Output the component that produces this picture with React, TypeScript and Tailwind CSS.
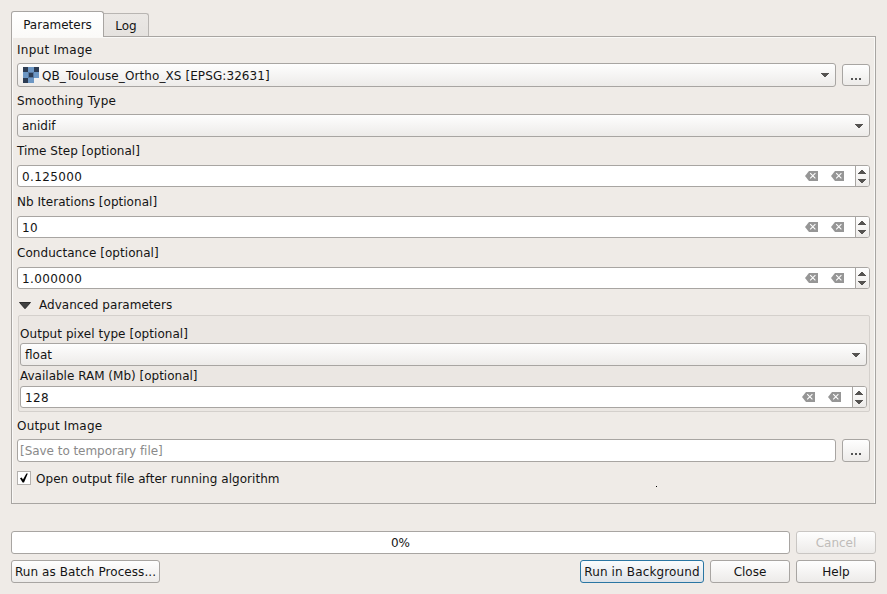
import React from "react";

const FIELD = "flex items-center rounded-[3px] border border-[#a8a5a2]";
const FACE = "bg-linear-to-b from-[#fefefe] to-[#edebe9]";

function Label({ text, className }: { text: string; className: string }) {
  return <div className={`leading-[15px] ${className}`}>{text}</div>;
}

function DownArrow({ className = "" }: { className?: string }) {
  return (
    <svg width="8" height="4" viewBox="0 0 8 4" className={`shrink-0 ${className}`} shapeRendering="crispEdges">
      <path d="M0 0h8v1h-1v1h-1v1h-1v1h-2v-1h-1v-1h-1v-1h-1z" fill="#555351" />
    </svg>
  );
}

function Combo({ value, className, icon }: { value: string; className: string; icon?: React.ReactNode }) {
  return (
    <div className={`${FIELD} ${FACE} ${className}`}>
      {icon}
      <span className="grow pt-[2px] leading-[15px]">{value}</span>
      <DownArrow className="mr-[6px]" />
    </div>
  );
}

function ClearIcon({ className }: { className: string }) {
  return (
    <svg width="13" height="10" viewBox="0 0 13 10" className={`shrink-0 ${className}`}>
      <path d="M4 0H13V10H4L0 5Z" fill="#969696" />
      <path d="M5.2 2.2l5.2 5.2M10.4 2.2L5.2 7.4" stroke="#fff" strokeWidth="1.1" />
    </svg>
  );
}

function Spin({ value }: { value: string }) {
  return (
    <div className={`${FIELD} h-[22px] bg-white pl-1`}>
      <span className="grow pt-[3px] leading-[15px] tracking-[0.36px]">{value}</span>
      <ClearIcon className="mr-[13px]" />
      <ClearIcon className="mr-[11px]" />
      <div className={`flex h-full w-[14px] flex-col items-center justify-between rounded-r-[2px] border-l border-[#a8a5a2] pt-1 pr-px pb-[3px] ${FACE}`}>
        <DownArrow className="rotate-180" />
        <DownArrow />
      </div>
    </div>
  );
}

function Button({ text, className }: { text: string; className: string }) {
  return (
    <button className={`flex h-[23px] shrink-0 items-center justify-center rounded-[3px] border pt-[2px] leading-[15px] whitespace-nowrap ${className}`}>
      {text}
    </button>
  );
}

function Dots() {
  return (
    <span className="mt-[7px] flex gap-[2px]">
      <i className="size-[2px] bg-[#555]" />
      <i className="size-[2px] bg-[#555]" />
      <i className="size-[2px] bg-[#555]" />
    </span>
  );
}

function BrowseButton({ className }: { className: string }) {
  return (
    <button aria-label="Browse" className={`flex w-[28px] shrink-0 items-center justify-center rounded-[3px] border border-[#a8a5a2] ${FACE} ${className}`}>
      <Dots />
    </button>
  );
}

function RasterIcon() {
  return (
    <svg width="16" height="16" viewBox="0 0 16 16" className="mr-[3px] ml-[5px] shrink-0" shapeRendering="crispEdges">
      <path d="M0 0h16v11H11v5H0z" fill="#6d97c4" />
      <path d="M5 5h6v6H5z" fill="#56779f" />
      <path d="M0 0h5v5H0zM11 0h5v5h-5zM6 6h4v4H6zM0 11h5v5H0z" fill="#2d3c53" />
    </svg>
  );
}

export default function App() {
  return (
    <div className="flex h-[594px] w-[887px] flex-col overflow-hidden bg-[#efebe7] px-[11px] pt-[11px] font-['DejaVu_Sans',sans-serif] text-[12px] text-[#141414]">
      <div className="relative z-10 flex items-end">
        <div className="-mb-px flex h-[26px] w-[93px] justify-center rounded-t-[3px] border border-b-0 border-[#a8a5a2] bg-linear-to-b from-white to-[#fbfaf8] pt-[6px] leading-[15px]">
          Parameters
        </div>
        <div className="flex h-[23px] w-[45px] justify-center rounded-tr-[3px] border border-b-0 border-l-0 border-[#b8b5b2] bg-linear-to-b from-[#ebe8e5] to-[#e5e2df] pt-[5px] leading-[15px]">
          Log
        </div>
      </div>

      <div className="relative flex h-[468px] shrink-0 flex-col border border-[#a8a5a2] px-[5px] shadow-[inset_1px_1px_0_#faf9f7,inset_-1px_0_0_#faf9f7]">
        <Label text="Input Image" className="h-[26px] pt-[6px] tracking-[0.27px]" />
        <div className="flex items-center gap-[6px]">
          <Combo value="QB_Toulouse_Ortho_XS [EPSG:32631]" className="h-[24px] grow tracking-[0.09px]" icon={<RasterIcon />} />
          <BrowseButton className="h-[22px]" />
        </div>
        <Label text="Smoothing Type" className="h-[27px] pt-[7px] tracking-[0.2px]" />
        <Combo value="anidif" className="h-[23px] pl-1" />
        <Label text="Time Step [optional]" className="h-[28px] pt-[7px] tracking-[0.03px]" />
        <Spin value="0.125000" />
        <Label text="Nb Iterations [optional]" className="h-[29px] pt-[8px] tracking-[0.03px]" />
        <Spin value="10" />
        <Label text="Conductance [optional]" className="h-[29px] pt-[8px] tracking-[0.05px]" />
        <Spin value="1.000000" />
        <div className="flex h-[26px] shrink-0 items-start pt-[8px]">
          <svg width="12" height="7" viewBox="0 0 12 7" className="mt-[5px] ml-[2px]">
            <path d="M0.5 0.5H11.5L6 6.7Z" fill="#414141" stroke="#2c2c2c" />
          </svg>
          <span className="mt-px ml-[8px] leading-[15px] tracking-[0.03px]">Advanced parameters</span>
        </div>
        <div className="ml-px h-[97px] shrink-0 rounded-[2px] border border-[#d4d0cc] bg-[#ebe7e3] pr-[2px] pl-px">
          <Label text="Output pixel type [optional]" className="h-[27px] pt-[11px] tracking-[0.06px]" />
          <Combo value="float" className="h-[23px] pl-1" />
          <Label text="Available RAM (Mb) [optional]" className="h-[20px] pt-[3px]" />
          <Spin value="128" />
        </div>
        <Label text="Output Image" className="h-[27px] pt-[7px] tracking-[0.18px]" />
        <div className="flex gap-[6px]">
          <div className={`${FIELD} h-[23px] grow bg-white pt-[2px] pl-[2px] leading-[15px] tracking-[-0.04px] text-[#8a8a8a]`}>[Save to temporary file]</div>
          <BrowseButton className="h-[23px]" />
        </div>
        <div className="mt-[9px] flex h-[14px] items-center">
          <div className="flex size-[14px] items-center justify-center border border-[#b4b1ae] bg-white">
            <svg width="8" height="10" viewBox="0 0 8 10">
              <path d="M0 5.2L1.6 4.6L3 6.6L6.4 0.6H7.8L4 9.4H2.6Z" fill="#000" />
            </svg>
          </div>
          <span className="ml-[5px] pt-[2px] leading-[15px] tracking-[0.05px]">Open output file after running algorithm</span>
        </div>
        <i className="absolute top-[449px] left-[644px] size-px bg-black" />
      </div>

      <div className="mt-[27px] flex gap-[6px]">
        <div className={`${FIELD} h-[23px] grow justify-center bg-white pt-[2px] leading-[15px]`}>0%</div>
        <Button text="Cancel" className={`w-[80px] border-[#c9c6c3] text-[#bfbcb9] ${FACE}`} />
      </div>
      <div className="mt-[6px] flex gap-[6px]">
        <Button text="Run as Batch Process..." className={`w-[149px] border-[#a8a5a2] tracking-[0.07px] ${FACE}`} />
        <Button text="Run in Background" className="ml-auto w-[124px] border-[#2a76a3] bg-linear-to-b from-[#fbfcfd] to-[#dde2e7] tracking-[0.14px]" />
        <Button text="Close" className={`w-[80px] border-[#a8a5a2] ${FACE}`} />
        <Button text="Help" className={`w-[80px] border-[#a8a5a2] ${FACE}`} />
      </div>
    </div>
  );
}
